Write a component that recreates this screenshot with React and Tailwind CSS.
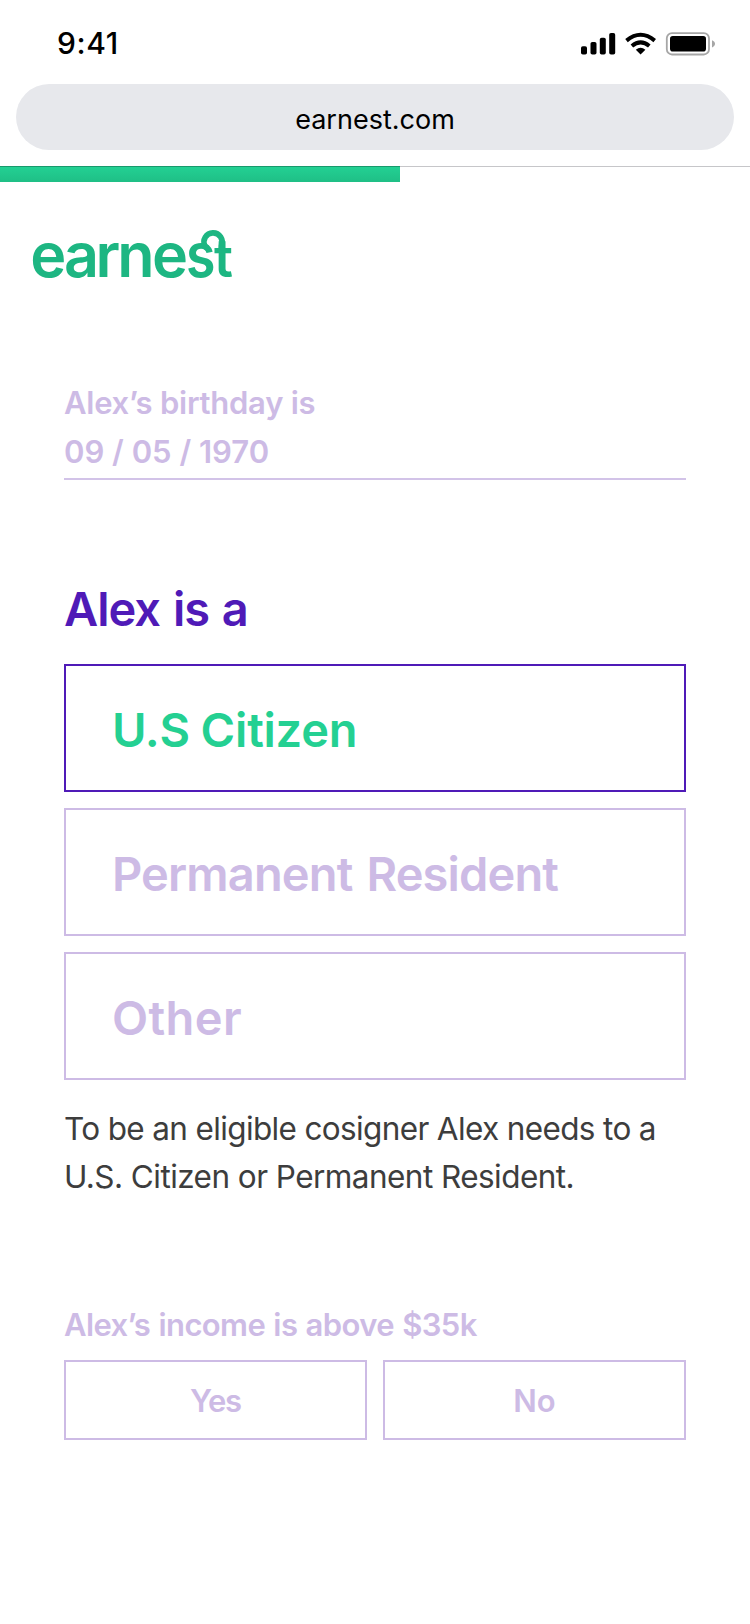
function StatusBar() {
  return (
    <div className="flex h-[84px] items-start justify-between pl-[57px] pr-[34px]">
      <span className="pt-[23px] text-[30px] font-medium leading-[40px] tracking-[0.6px] text-black">9:41</span>
      <svg className="mt-[31px]" width="136" height="26" viewBox="580 31 136 26">
        <g fill="#000">
          <rect x="581" y="46.2" width="6" height="8.3" rx="1.8" />
          <rect x="590.5" y="42" width="6" height="12.5" rx="1.8" />
          <rect x="599.8" y="37.8" width="6" height="16.7" rx="1.8" />
          <rect x="609.2" y="33" width="6" height="21.5" rx="1.8" />
          <path d="M640.6 54.6 L635.8 49.8 Q640.6 45.8 645.4 49.8 Z" />
        </g>
        <g fill="none" stroke="#000" strokeWidth="4">
          <path d="M626.5 40.6 Q640.6 28.9 654.7 40.6" />
          <path d="M631.9 46 Q640.6 38.8 649.3 46" />
        </g>
        <rect x="666.8" y="33.1" width="42.2" height="21.4" rx="5.2" fill="none" stroke="#a6a6a6" strokeWidth="1.8" />
        <rect x="670" y="36" width="36" height="15.6" rx="2.8" fill="#000" />
        <path d="M712 40.2 C716 41.8 716 45.8 712 47.4 Z" fill="#a6a6a6" />
      </svg>
    </div>
  );
}

function Logo() {
  return (
    <svg className="ml-[30px] mt-[30px] block" width="212" height="84" viewBox="30 212 212 84" role="img" aria-label="earnest">
      <g fill="#1db682" fontFamily="Inter, sans-serif" fontSize="61" fontWeight="600">
        <text x="30.2 64 95.5 117.3 152" y="277">earne</text>
        <text transform="translate(186 277) scale(0.88 1)">s</text>
        <text transform="translate(213.9 277) scale(0.88 0.86)">t</text>
      </g>
      <path
        d="M207 248 L204.9 246 A9.1 9.1 0 1 1 221.4 245.6 L221.2 250"
        fill="none"
        stroke="#1db682"
        strokeWidth="5.6"
        strokeLinejoin="round"
      />
    </svg>
  );
}

const options = [
  { label: 'U.S Citizen', box: 'border-[#4f1ab7] text-[#24d092]', text: 'tracking-[-0.2px] [word-spacing:-1px]' },
  { label: 'Permanent Resident', box: 'border-[#cdbbe5] text-[#cdbbe5]', text: 'tracking-[-0.85px] [word-spacing:3px]' },
  { label: 'Other', box: 'border-[#cdbbe5] text-[#cdbbe5]', text: 'tracking-[0.4px]' },
];

export default function App() {
  return (
    <div className="flex h-[1624px] w-[750px] flex-col bg-white font-['Inter',sans-serif]">
      <StatusBar />
      <div className="mx-4 flex h-[66px] items-center justify-center rounded-full bg-[#e7e8ec] pt-1.5 text-[27px] leading-[40px] text-black">
        earnest.com
      </div>
      <div className="mt-4 flex h-4">
        <div className="w-[400px] border-t border-black/20 bg-linear-to-b from-[#23d093] to-[#1fbf86]" />
        <div className="flex-1 border-t border-[#c6c6c9]" />
      </div>
      <Logo />

      <main className="mt-[83px] flex flex-col px-16">
        <section className="border-b-2 border-[#d2c3e8] pb-0.5 text-[31px] font-semibold leading-[48px] text-[#cdbbe5]">
          <p className="tracking-[-0.25px]">Alex’s birthday is</p>
          <p className="pt-px">09 / 05 / 1970</p>
        </section>

        <section className="mt-[99px]">
          <h1 className="text-[47px] font-semibold leading-[60px] tracking-[-1px] text-[#4f1ab7] [word-spacing:2px]">Alex is a</h1>
          <div className="mt-[25px] flex flex-col gap-4">
            {options.map((o) => (
              <button key={o.label} className={'flex h-32 items-center border-2 pl-[46px] pt-[3px] text-[47px] font-semibold leading-[60px] ' + o.box}>
                <span className={o.text}>{o.label}</span>
              </button>
            ))}
          </div>
          <div className="mt-[25px] whitespace-nowrap text-[31.5px] leading-[48px] text-[#3d3d3d]">
            <p className="tracking-[-0.64px]">To be an eligible cosigner Alex needs to a</p>
            <p className="tracking-[-0.55px]">U.S. Citizen or Permanent Resident.</p>
          </div>
        </section>

        <section className="mt-[100px] font-semibold leading-[48px] text-[#cdbbe5]">
          <p className="text-[31px] tracking-[-0.6px] [word-spacing:1px]">Alex’s income is above $35k</p>
          <div className="mt-[11px] grid grid-cols-2 gap-4">
            <button className="flex h-20 items-center justify-center border-2 border-[#cdbbe5] pt-px text-[31px] tracking-[-1.2px]">Yes</button>
            <button className="flex h-20 items-center justify-center border-2 border-[#cdbbe5] pt-px text-[31px]">No</button>
          </div>
        </section>
      </main>
    </div>
  );
}
